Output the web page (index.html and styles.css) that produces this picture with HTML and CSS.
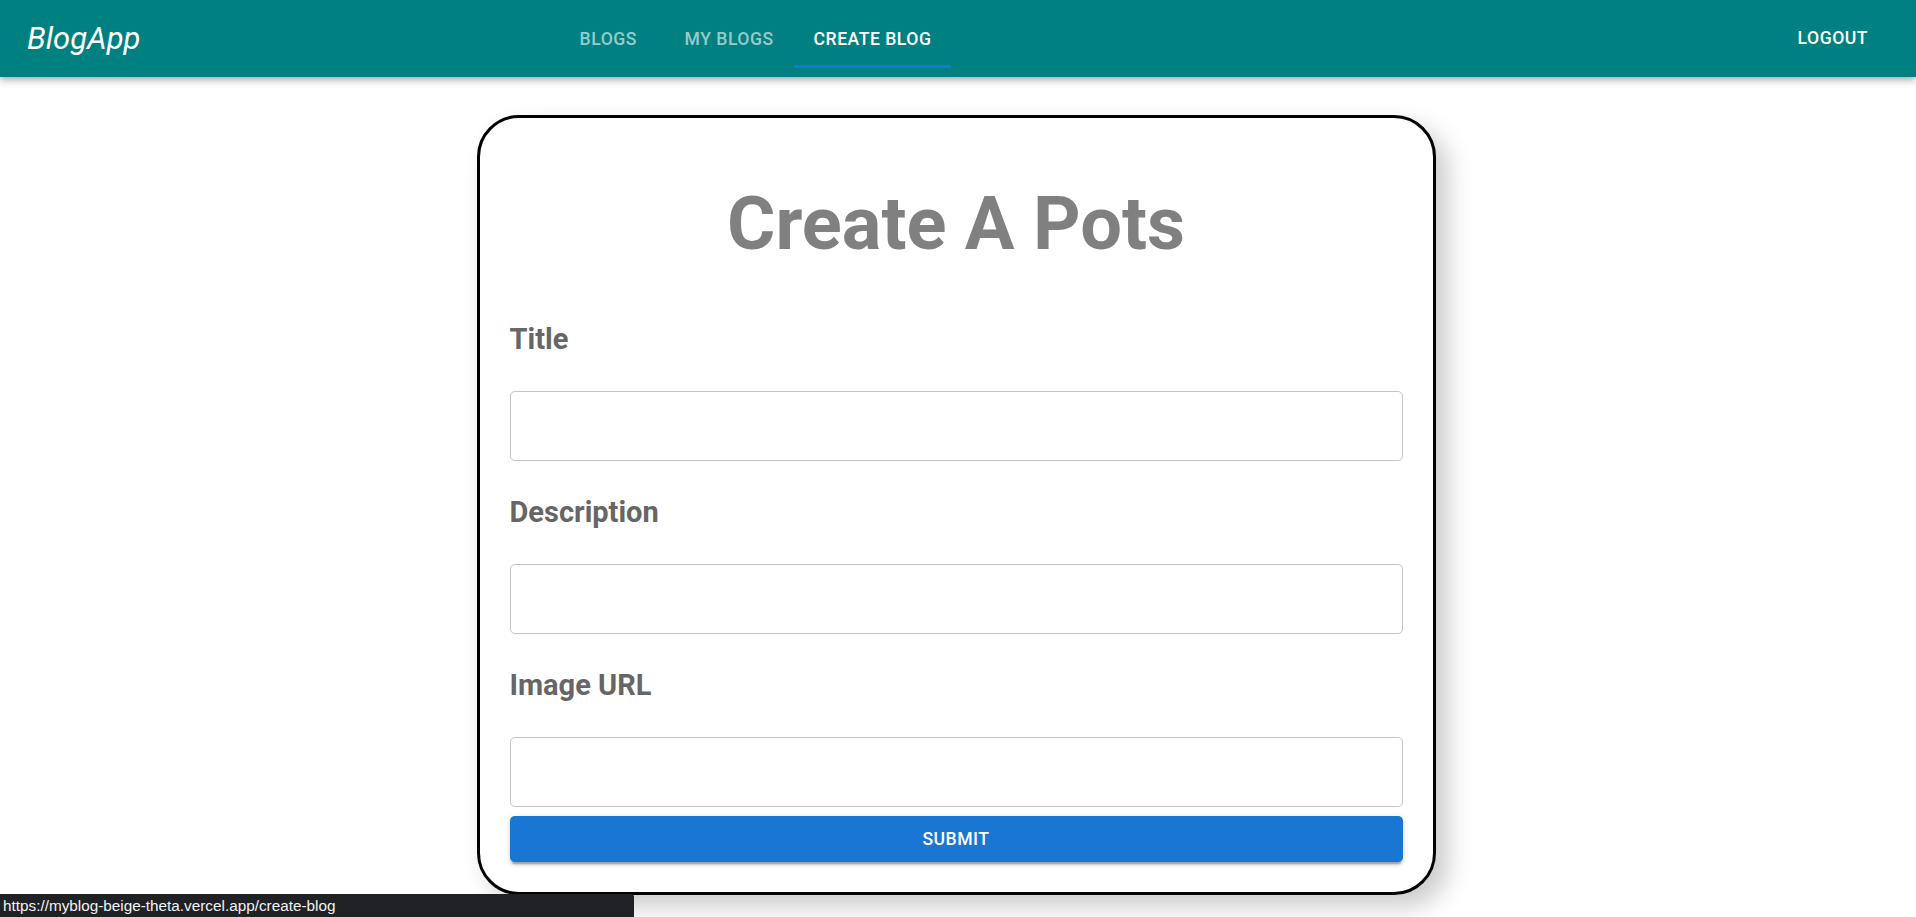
FILE: index.html
```html
<!DOCTYPE html>
<html lang="en">
<head>
<meta charset="utf-8">
<title>BlogApp</title>
<link rel="stylesheet" href="styles.css">
</head>
<body>
<header class="appbar">
  <div class="logo">BlogApp</div>
  <nav class="tabs">
    <a class="tab">Blogs</a>
    <a class="tab">My Blogs</a>
    <a class="tab tab-active">Create Blog</a>
  </nav>
  <button class="logout">Logout</button>
</header>

<main class="page">
  <form class="card">
    <h2 class="card-title">Create A Pots</h2>
    <label class="field-label">Title</label>
    <div class="field"><input class="field-input" type="text"></div>
    <label class="field-label">Description</label>
    <div class="field"><input class="field-input" type="text"></div>
    <label class="field-label">Image URL</label>
    <div class="field field-last"><input class="field-input" type="text"></div>
    <button class="submit" type="button">Submit</button>
  </form>
</main>

<div class="status-bubble">https://myblog-beige-theta.vercel.app/create-blog</div>
</body>
</html>
```

FILE: styles.css
```css
* {
  box-sizing: border-box;
}

html, body {
  margin: 0;
  padding: 0;
  background: #ffffff;
}

body {
  font-family: Roboto, "Liberation Sans", Arial, sans-serif;
  min-height: 917px;
}

/* ---------- App bar ---------- */
.appbar {
  height: 77px;
  background: #008080;
  color: #ffffff;
  display: flex;
  align-items: center;
  padding: 0 28.8px 0 27px;
  box-shadow: 0 2.4px 4.8px -1.2px rgba(0,0,0,0.2),
              0 4.8px 6px 0 rgba(0,0,0,0.14),
              0 1.2px 12px 0 rgba(0,0,0,0.12);
  position: relative;
  z-index: 2;
}

.logo {
  font-size: 31px;
  font-style: italic;
  font-weight: 400;
  line-height: 1.6;
  width: 525px;
}

.tabs {
  display: flex;
  height: 58px;
}

.tab {
  position: relative;
  min-width: 112.5px;
  padding: 0 20px;
  display: flex;
  align-items: center;
  justify-content: center;
  font-size: 17.6px;
  font-weight: 500;
  letter-spacing: 0.02857em;
  text-transform: uppercase;
  color: rgba(255,255,255,0.6);
  cursor: pointer;
}

.tab-active {
  color: #ffffff;
}

.tab-active::after {
  content: "";
  position: absolute;
  left: 0;
  right: 0;
  bottom: 0;
  height: 2.4px;
  background: #1976d2;
}

.logout {
  margin-left: auto;
  margin-right: 9.6px;
  background: transparent;
  border: 0;
  color: #ffffff;
  font-family: inherit;
  font-size: 17.6px;
  font-weight: 500;
  letter-spacing: 0.02857em;
  text-transform: uppercase;
  padding: 7.2px 9.6px;
  line-height: 1.75;
  cursor: pointer;
}

/* ---------- Card ---------- */
.page {
  padding: 38px 4px 0 0;
}

.card {
  width: 959px;
  margin: 0 auto;
  border: 3px solid #000000;
  border-radius: 42px;
  padding: 30px;
  background: #ffffff;
  box-shadow: 12px 12px 24px #cccccc;
  display: flex;
  flex-direction: column;
}

.card-title {
  margin: 32px 0 55px;
  font-size: 74px;
  line-height: 87px;
  font-weight: 700;
  color: #808080;
  text-align: center;
}

.field-label {
  display: block;
  font-size: 29px;
  line-height: 35px;
  font-weight: 700;
  color: #666666;
  margin-bottom: 33.6px;
}

.field {
  margin-bottom: 34.6px;
}

.field-last {
  margin-bottom: 9px;
}

.field-input {
  display: block;
  width: 100%;
  height: 70px;
  border: 1px solid #c4c4c4;
  border-radius: 4.8px;
  padding: 0 16.8px;
  font-family: inherit;
  font-size: 19.2px;
  outline: none;
  background: #ffffff;
}

.submit {
  height: 46px;
  width: 100%;
  border: 0;
  border-radius: 4.8px;
  background: #1976d2;
  color: #ffffff;
  font-family: inherit;
  font-size: 17.6px;
  font-weight: 500;
  letter-spacing: 0.02857em;
  text-transform: uppercase;
  cursor: pointer;
  box-shadow: 0 3.6px 1.2px -2.4px rgba(0,0,0,0.2),
              0 2.4px 2.4px 0 rgba(0,0,0,0.14),
              0 1.2px 6px 0 rgba(0,0,0,0.12);
}

/* ---------- Browser status bubble (overlay) ---------- */
.status-bubble {
  position: fixed;
  left: 0;
  bottom: 0;
  width: 634px;
  height: 23px;
  background: #202124;
  color: #f1f3f4;
  font-family: "Liberation Sans", Arial, sans-serif;
  font-size: 15.3px;
  line-height: 23px;
  padding: 0 3px;
  border-top-right-radius: 3px;
  white-space: nowrap;
  overflow: hidden;
  z-index: 10;
}
```
